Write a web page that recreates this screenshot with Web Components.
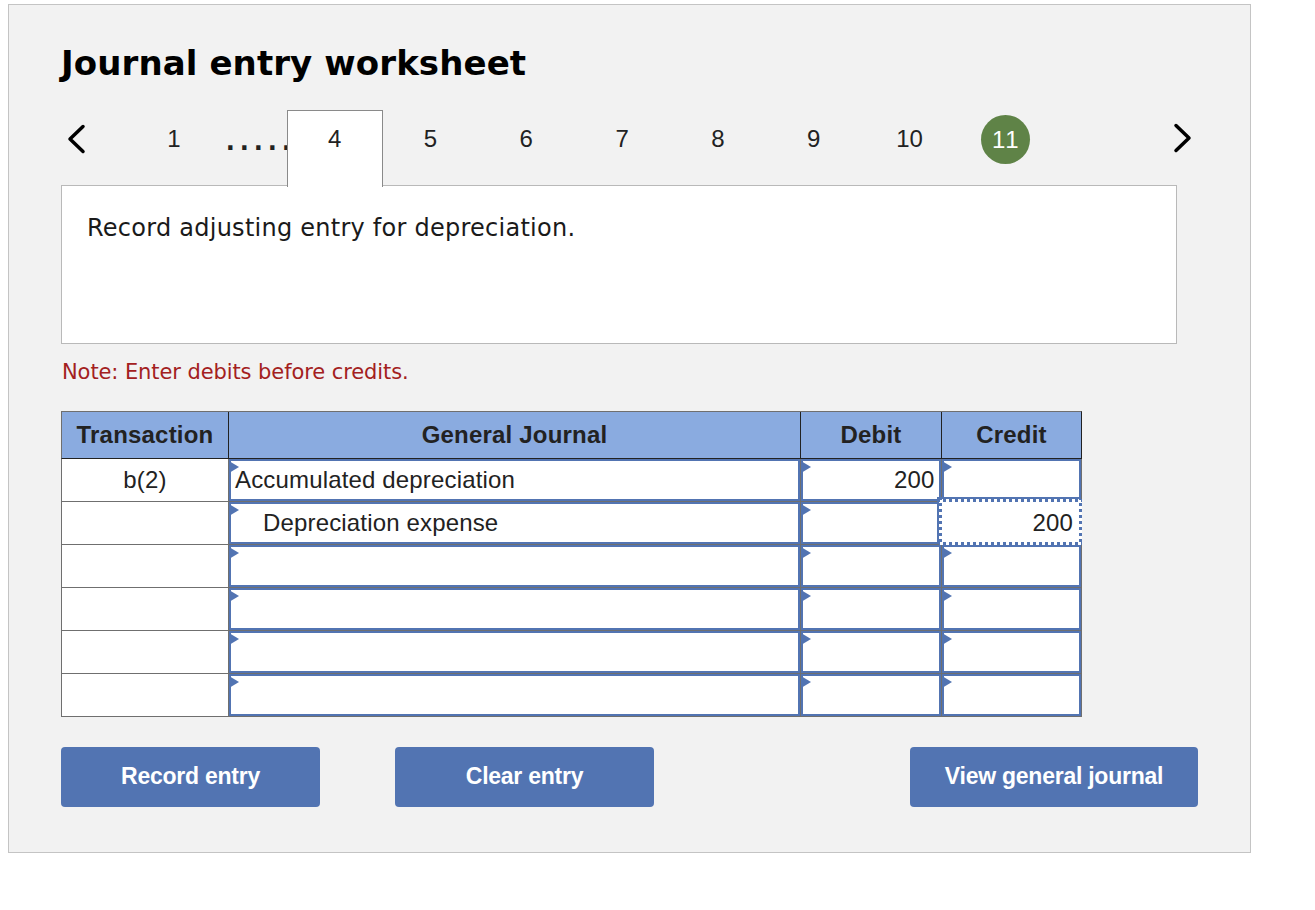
<!DOCTYPE html>
<html lang="en">
<head>
<meta charset="utf-8">
<title>Journal entry worksheet</title>
<style>
  html, body { background: #fff; }
  body { margin: 4px 8px; font-family: "Liberation Sans", Arial, sans-serif; }
</style>
</head>
<body>
<journal-worksheet heading="Journal entry worksheet">
  <step-nav slot="nav" current="4" done="11"></step-nav>
  <span slot="prompt">Record adjusting entry for depreciation.</span>
  <span slot="note">Note: Enter debits before credits.</span>
  <journal-table slot="table">
    <tx-cell>b(2)</tx-cell><journal-entry>Accumulated depreciation</journal-entry><journal-entry align="right">200</journal-entry><journal-entry></journal-entry>
    <tx-cell></tx-cell><journal-entry indent>Depreciation expense</journal-entry><journal-entry></journal-entry><journal-entry align="right" focused>200</journal-entry>
    <tx-cell></tx-cell><journal-entry></journal-entry><journal-entry></journal-entry><journal-entry></journal-entry>
    <tx-cell></tx-cell><journal-entry></journal-entry><journal-entry></journal-entry><journal-entry></journal-entry>
    <tx-cell></tx-cell><journal-entry></journal-entry><journal-entry></journal-entry><journal-entry></journal-entry>
    <tx-cell></tx-cell><journal-entry></journal-entry><journal-entry></journal-entry><journal-entry></journal-entry>
  </journal-table>
  <action-button slot="actions" style="--btn-width:259px">Record entry</action-button>
  <action-button slot="actions" style="--btn-width:259px">Clear entry</action-button>
  <action-button slot="actions" style="--btn-width:288px;margin-left:auto">View general journal</action-button>
</journal-worksheet>

<script>
(function () {
  const worksheet = document.createElement('template');
  worksheet.innerHTML = `
    <style>
      :host { display: block; width: 1243px; height: 849px; box-sizing: border-box; background: #f2f2f2; border: 1px solid #c4c4c4; padding: 36px 52px 0; color: #000; }
      h1 { margin: 0; height: 44px; font: bold 34px/44px "DejaVu Sans", Verdana, sans-serif; letter-spacing: .1px; }
      .nav { display: block; margin-top: 25px; }
      .prompt { height: 159px; box-sizing: border-box; width: 1116px; background: #fff; border: 1px solid #b9b9b9; padding: 26px 25px 0; font: 24px/32px "DejaVu Sans", Verdana, sans-serif; letter-spacing: .25px; color: #1a1a1a; }
      .note { margin-top: 15px; height: 27px; font: 21px/27px "DejaVu Sans", Verdana, sans-serif; letter-spacing: -.09px; color: #a32020; padding-left: 1px; }
      .table { display: block; margin-top: 25px; }
      .actions { display: flex; gap: 75px; margin-top: 30px; }
    </style>
    <h1></h1>
    <div class="nav"><slot name="nav"></slot></div>
    <div class="prompt"><slot name="prompt"></slot></div>
    <div class="note"><slot name="note"></slot></div>
    <div class="table"><slot name="table"></slot></div>
    <div class="actions"><slot name="actions"></slot></div>
  `;

  class JournalWorksheet extends HTMLElement {
    constructor() {
      super();
      this.attachShadow({ mode: 'open' });
      this.shadowRoot.appendChild(worksheet.content.cloneNode(true));
      this.shadowRoot.querySelector('h1').textContent = this.getAttribute('heading');
    }
  }
  customElements.define('journal-worksheet', JournalWorksheet);

  const nav = document.createElement('template');
  nav.innerHTML = `
    <style>
      :host { display: flex; align-items: stretch; height: 77px; margin-bottom: -2px; position: relative; z-index: 1; font: 24px "Liberation Sans", Arial, sans-serif; color: #222; }
      .arrow { display: flex; align-items: flex-start; padding-top: 13px; box-sizing: border-box; }
      .prev { width: 65px; padding-left: 5px; padding-top: 14px; }
      .next { margin-left: auto; margin-right: 5px; }
      .step { width: 95.8px; box-sizing: border-box; padding-top: 15px; text-align: center; line-height: 28px; }
      .dots { width: 65px; box-sizing: border-box; padding-left: 4px; font: bold 24px/64px "DejaVu Sans", sans-serif; letter-spacing: 4.9px; color: #222; white-space: nowrap; overflow: hidden; }
      .current { background: #fff; border: 1px solid #8a8a8a; border-bottom: 0; padding-top: 14px; }
      .done { padding-top: 5px; }
      .done span { display: block; width: 49px; height: 49px; margin: 0 auto; border-radius: 50%; background: #5f8347; color: #fff; line-height: 49px; font-kerning: none; }
    </style>
    <div class="arrow prev"><svg width="20" height="30" viewBox="0 0 20 30"><path d="M17 2.5 4 15l13 12.5" fill="none" stroke="#000" stroke-width="3.5" stroke-linecap="round" stroke-linejoin="round"/></svg></div>
    <div class="step">1</div>
    <div class="dots">.....</div>
    <div class="steps" style="display:contents"></div>
    <div class="arrow next"><svg width="20" height="30" viewBox="0 0 20 30"><path d="M3 2.5 16 15 3 27.5" fill="none" stroke="#000" stroke-width="3.5" stroke-linecap="round" stroke-linejoin="round"/></svg></div>
  `;

  class StepNav extends HTMLElement {
    constructor() {
      super();
      this.attachShadow({ mode: 'open' });
      this.shadowRoot.appendChild(nav.content.cloneNode(true));
      const holder = this.shadowRoot.querySelector('.steps');
      const current = this.getAttribute('current');
      const done = this.getAttribute('done');
      for (let n = 4; n <= 11; n++) {
        const el = document.createElement('div');
        el.className = 'step';
        if (String(n) === current) el.classList.add('current');
        if (String(n) === done) {
          el.classList.add('done');
          el.innerHTML = '<span>' + n + '</span>';
        } else {
          el.textContent = n;
        }
        holder.appendChild(el);
      }
    }
  }
  customElements.define('step-nav', StepNav);

  const txCell = document.createElement('template');
  txCell.innerHTML = `
    <style>
      :host { display: block; background: #fff; height: 42px; font: 24px/42px "Liberation Sans", Arial, sans-serif; letter-spacing: .16px; color: #222; text-align: center; }
    </style>
    <slot></slot>
  `;

  class TxCell extends HTMLElement {
    constructor() {
      super();
      this.attachShadow({ mode: 'open' });
      this.shadowRoot.appendChild(txCell.content.cloneNode(true));
    }
  }
  customElements.define('tx-cell', TxCell);

  const entry = document.createElement('template');
  entry.innerHTML = `
    <style>
      :host { display: block; position: relative; box-sizing: border-box; background: #fff; border: 2px solid #5274b2; height: 42px; padding: 0 4px; font: 24px/38px "Liberation Sans", Arial, sans-serif; letter-spacing: .16px; color: #222; white-space: nowrap; }
      :host([align="right"]) { text-align: right; padding-right: 4.5px; }
      :host([indent]) { padding-left: 32px; }
      :host([focused]) { padding-right: 6px; z-index: 1; border-color: #fff; }
      :host([focused]) .mark { display: none; }
      .text { position: relative; z-index: 1; }
      /* square dots, a dotted border would come out round */
      .focus { display: none; position: absolute; top: -5px; bottom: -3px; left: -5px; right: -3px; box-shadow: -2px -2px 0 #5274b2; background:
        linear-gradient(90deg, #5274b2 3px, transparent 3px) 4px 0 / 6px 3px repeat-x,
        linear-gradient(90deg, #5274b2 3px, transparent 3px) 4px 100% / 6px 3px repeat-x,
        linear-gradient(#5274b2 3px, transparent 3px) 0 4px / 3px 6px repeat-y,
        linear-gradient(#5274b2 3px, transparent 3px) 100% 4px / 3px 6px repeat-y,
        #fff; }
      :host([focused]) .focus { display: block; }
      .mark { position: absolute; left: -2px; top: 0; width: 0; height: 0; border-left: 10px solid #5274b2; border-top: 6.5px solid transparent; border-bottom: 6.5px solid transparent; }
    </style>
    <span class="focus"></span><span class="mark"></span><span class="text"><slot></slot></span>
  `;

  class JournalEntry extends HTMLElement {
    constructor() {
      super();
      this.attachShadow({ mode: 'open' });
      this.shadowRoot.appendChild(entry.content.cloneNode(true));
    }
  }
  customElements.define('journal-entry', JournalEntry);

  const table = document.createElement('template');
  table.innerHTML = `
    <style>
      :host { display: block; width: 1021px; font: 24px "Liberation Sans", Arial, sans-serif; color: #222; }
      .grid { display: grid; grid-template-columns: 166px 571px 140px 139px; column-gap: 1px; }
      .head { background: #222; border: 1px solid #6f6f6f; border-right-color: #222; border-bottom: 1px solid #222; }
      .head div { background: #8aabe0; height: 46px; line-height: 46px; text-align: center; font-weight: bold; letter-spacing: .2px; white-space: nowrap; }
      .body { background: #6f6f6f; row-gap: 1px; border: 1px solid #6f6f6f; border-top: 0; }
    </style>
    <div class="grid head"><div>Transaction</div><div>General Journal</div><div>Debit</div><div>Credit</div></div>
    <div class="grid body"><slot></slot></div>
  `;

  class JournalTable extends HTMLElement {
    constructor() {
      super();
      this.attachShadow({ mode: 'open' });
      this.shadowRoot.appendChild(table.content.cloneNode(true));
    }
  }
  customElements.define('journal-table', JournalTable);

  const button = document.createElement('template');
  button.innerHTML = `
    <style>
      :host { display: block; width: var(--btn-width); height: 60px; border-radius: 4px; background: #5274b2; color: #fff; font: bold 23px/58px "Liberation Sans", Arial, sans-serif; letter-spacing: -.25px; text-align: center; }
    </style>
    <slot></slot>
  `;

  class ActionButton extends HTMLElement {
    constructor() {
      super();
      this.attachShadow({ mode: 'open' });
      this.shadowRoot.appendChild(button.content.cloneNode(true));
    }
  }
  customElements.define('action-button', ActionButton);
})();
</script>
</body>
</html>
